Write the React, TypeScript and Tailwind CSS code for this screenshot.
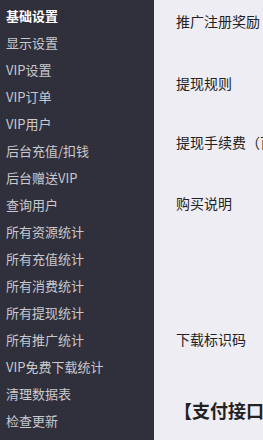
import React from 'react';

const menu = [
  '基础设置',
  '显示设置',
  'VIP设置',
  'VIP订单',
  'VIP用户',
  '后台充值/扣钱',
  '后台赠送VIP',
  '查询用户',
  '所有资源统计',
  '所有充值统计',
  '所有消费统计',
  '所有提现统计',
  '所有推广统计',
  'VIP免费下载统计',
  '清理数据表',
  '检查更新',
];

const App: React.FC = () => {
  return (
    <div
      className="flex w-[263px] h-[440px] overflow-hidden"
      style={{ fontFamily: '"Noto Sans CJK SC", "Liberation Sans", sans-serif' }}
    >
      {/* 左侧菜单 */}
      <div className="w-[154px] shrink-0 bg-[#30303c] pt-[5px]">
        {menu.map((item, i) => (
          <div
            key={item}
            className={
              i === 0
                ? 'h-[27px] leading-[22px] pl-[6px] text-[13px] font-bold text-white whitespace-nowrap'
                : 'h-[27px] leading-[22px] pl-[6px] text-[13px] text-[#c9c9cf] whitespace-nowrap'
            }
          >
            {item}
          </div>
        ))}
      </div>

      {/* 右侧内容 */}
      <div className="flex-1 min-w-0 bg-[#efedf4] pl-[22px] text-[14px] leading-[21px] text-[#222] whitespace-nowrap overflow-hidden">
        <div className="pt-[11px] h-[73px]">推广注册奖励</div>
        <div className="h-[59px]">提现规则</div>
        <div className="h-[61px]">提现手续费（百分比）</div>
        <div className="h-[136px]">购买说明</div>
        <div className="h-[68px]">下载标识码</div>
        <div className="text-[18px] leading-[27px] font-bold -ml-[2px]">【支付接口设置】</div>
      </div>
    </div>
  );
};

export default App;
